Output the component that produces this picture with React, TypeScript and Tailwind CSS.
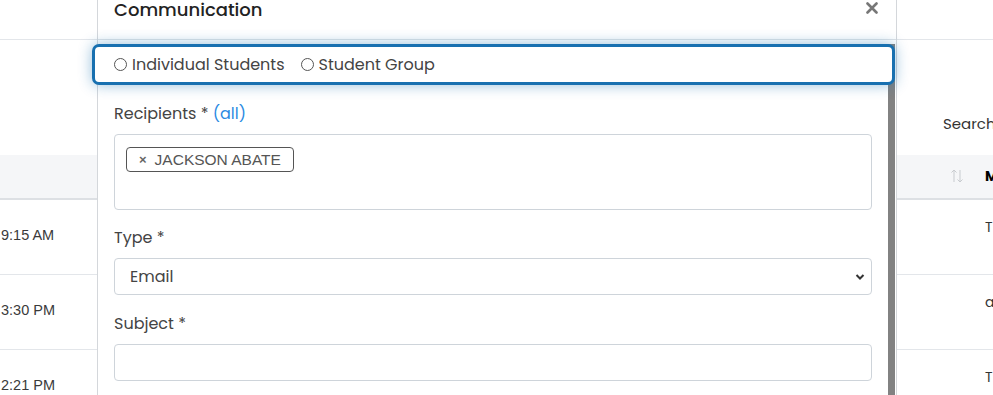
import React from "react";

const font = { fontFamily: "Poppins, Inter, 'Noto Sans', sans-serif" };
const arial = { fontFamily: "'Liberation Sans', Arial, sans-serif" };

const rows = ["9:15 AM", "3:30 PM", "2:21 PM"];
const rightCells = ["T", "a", "T"];

const App = () => {
  return (
    <div className="relative w-[993px] h-[395px] overflow-hidden bg-white text-[#333]" style={font}>
      {/* Page behind the modal */}
      <div className="h-[40px] border-b border-[#e3e6ea]" />
      <div className="h-[115px] flex items-end justify-end pb-[20px]">
        <span className="text-[15px] text-[#333] w-[50px]">Search</span>
      </div>
      {/* Table header */}
      <div className="h-[45px] bg-[#f5f6f8] border-b-2 border-[#dde0e4] flex items-center justify-end">
        <svg width="14" height="14" viewBox="0 0 14 14" className="mr-[21px] -mt-[2px]">
          <path d="M4 13 V1 M1.5 3.5 L4 1 L6.5 3.5" fill="none" stroke="#c8cbcf" strokeWidth="1" />
          <path d="M10 1 V13 M7.5 10.5 L10 13 L12.5 10.5" fill="none" stroke="#c8cbcf" strokeWidth="1" />
        </svg>
        <span className="text-[14px] font-bold text-black w-[8px]">M</span>
      </div>
      {rows.map((t, i) => (
        <div key={t} className="h-[75px] border-b border-[#e3e6ea] flex items-center justify-between">
          <span className="text-[14.5px] pl-[1px] text-[#3a3a3a] -mt-[2px]" style={arial}>{t}</span>
          <span className="text-[14px] w-[8px] -mt-[20px]">{rightCells[i]}</span>
        </div>
      ))}

      {/* Modal */}
      <div className="absolute left-[97px] top-0 w-[800px] h-[395px] bg-white border-x border-[#d4d7db] flex flex-col">
        <div className="h-[40px] shrink-0 border-b border-[#dfe3e7] flex justify-between px-4">
          <h2 className="text-[18px] leading-[20px] font-medium text-[#222]">Communication</h2>
          <svg width="12" height="12" viewBox="0 0 12 12" className="mt-[2px] mr-[2px]">
            <path d="M1.5 1.5 L10.5 10.5 M10.5 1.5 L1.5 10.5" stroke="#777" strokeWidth="2.6" strokeLinecap="round" />
          </svg>
        </div>
        <div className="flex flex-1 min-h-0">
          <div className="flex-1 pl-4 pr-4">
            {/* Radio group (focused) */}
            <div className="relative z-10 mt-[4px] -ml-[22px] -mr-[23px] h-[41px] border-[3px] border-[#1870b0] rounded-[7px] bg-white shadow-[0_0_14px_rgba(24,112,176,0.45)] flex items-center pl-[19px] gap-[16px] text-[16px] text-[#444]">
              <label className="flex items-center gap-[5px]">
                <span className="w-[13px] h-[13px] rounded-full border border-[#555] bg-white" />
                Individual Students
              </label>
              <label className="flex items-center gap-[5px]">
                <span className="w-[13px] h-[13px] rounded-full border border-[#555] bg-white" />
                Student Group
              </label>
            </div>

            <div className="mt-[17px] text-[16px] text-[#444] leading-[24px]">
              Recipients * <span className="text-[#2a8ae2]">(all)</span>
            </div>
            <div className="mt-[8px] h-[76px] border border-[#ced4da] rounded-[4px] px-[11px] pt-[12px]">
              <span
                className="inline-flex items-center h-[25px] pl-[12px] pr-[12px] border border-[#555] rounded-[4px] text-[15.5px] text-[#555] gap-[8px]"
                style={arial}
              >
                <span className="text-[13px] font-bold text-[#666]">×</span>
                JACKSON ABATE
              </span>
            </div>

            <div className="mt-[16px] text-[16px] text-[#444] leading-[24px]">Type *</div>
            <div className="mt-[8px] h-[37px] border border-[#ced4da] rounded-[4px] flex items-center justify-between pl-[15px] pr-[6px]">
              <span className="text-[16px] text-[#444]">Email</span>
              <svg width="10" height="8" viewBox="0 0 10 8">
                <path d="M1.5 2 L5 5.5 L8.5 2" fill="none" stroke="#333" strokeWidth="2" />
              </svg>
            </div>

            <div className="mt-[17px] text-[16px] text-[#444] leading-[24px]">Subject *</div>
            <div className="mt-[8px] h-[37px] border border-[#ced4da] rounded-[4px]" />
          </div>
          {/* Scrollbar */}
          <div className="w-[7px] mr-[1px] mt-[4px] bg-[#828282]" />
        </div>
      </div>
    </div>
  );
};

export default App;
